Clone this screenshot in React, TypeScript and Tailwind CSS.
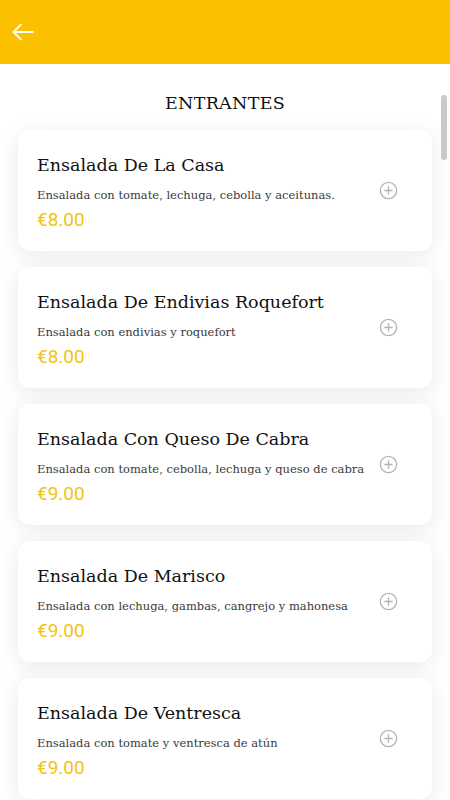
import React from 'react';

const items = [
  { name: 'Ensalada De La Casa', desc: 'Ensalada con tomate, lechuga, cebolla y aceitunas.', price: '€8.00' },
  { name: 'Ensalada De Endivias Roquefort', desc: 'Ensalada con endivias y roquefort', price: '€8.00' },
  { name: 'Ensalada Con Queso De Cabra', desc: 'Ensalada con tomate, cebolla, lechuga y queso de cabra', price: '€9.00' },
  { name: 'Ensalada De Marisco', desc: 'Ensalada con lechuga, gambas, cangrejo y mahonesa', price: '€9.00' },
  { name: 'Ensalada De Ventresca', desc: 'Ensalada con tomate y ventresca de atún', price: '€9.00' },
];

const slab = { fontFamily: '"DejaVu Serif", "Liberation Serif", serif' };

const PlusCircle = () => (
  <svg width="19" height="19" viewBox="0 0 20 20" fill="none" stroke="#b5b5b5" strokeWidth="1.4">
    <circle cx="10" cy="10" r="8.6" />
    <path d="M10 5.6v8.8M5.6 10h8.8" />
  </svg>
);

const App = () => {
  return (
    <div className="relative w-[450px] h-[800px] overflow-hidden bg-white">
      <header className="h-16 bg-[#fbc000] flex items-center px-3">
        <svg width="24" height="24" viewBox="0 0 24 24" fill="none" stroke="#fff" strokeWidth="1.8" strokeLinecap="round" strokeLinejoin="round">
          <path d="M21 12H2M9 4.5 1.5 12 9 19.5" />
        </svg>
      </header>

      <div className="absolute right-[3px] top-[95px] w-[6px] h-[65px] rounded-full bg-[#c9c9c9]"></div>

      <main className="px-[18px] pt-[27px]">
        <h1 className="text-center text-[17.5px] leading-6 text-[#111] tracking-[0.3px] mb-[15px]" style={slab}>
          ENTRANTES
        </h1>
        <div className="flex flex-col gap-4">
          {items.map((item, i) => (
            <div
              key={i}
              className="h-[121px] rounded-xl bg-white shadow-[0_4px_22px_rgba(0,0,0,0.09)] flex items-center pl-[19px] pr-[34px]"
            >
              <div className="flex-1 pt-[4px]">
                <h2 className="text-[17.5px] leading-6 text-[#111]" style={slab}>{item.name}</h2>
                <p className="mt-[9px] text-[11.5px] leading-[18px] text-[#3a3a3a]" style={slab}>{item.desc}</p>
                <p className="mt-[4px] text-[19px] leading-6 text-[#f2c40f]" style={{ fontFamily: 'Roboto, "Liberation Sans", sans-serif' }}>
                  {item.price}
                </p>
              </div>
              <PlusCircle />
            </div>
          ))}
        </div>
      </main>
    </div>
  );
};

export default App;
